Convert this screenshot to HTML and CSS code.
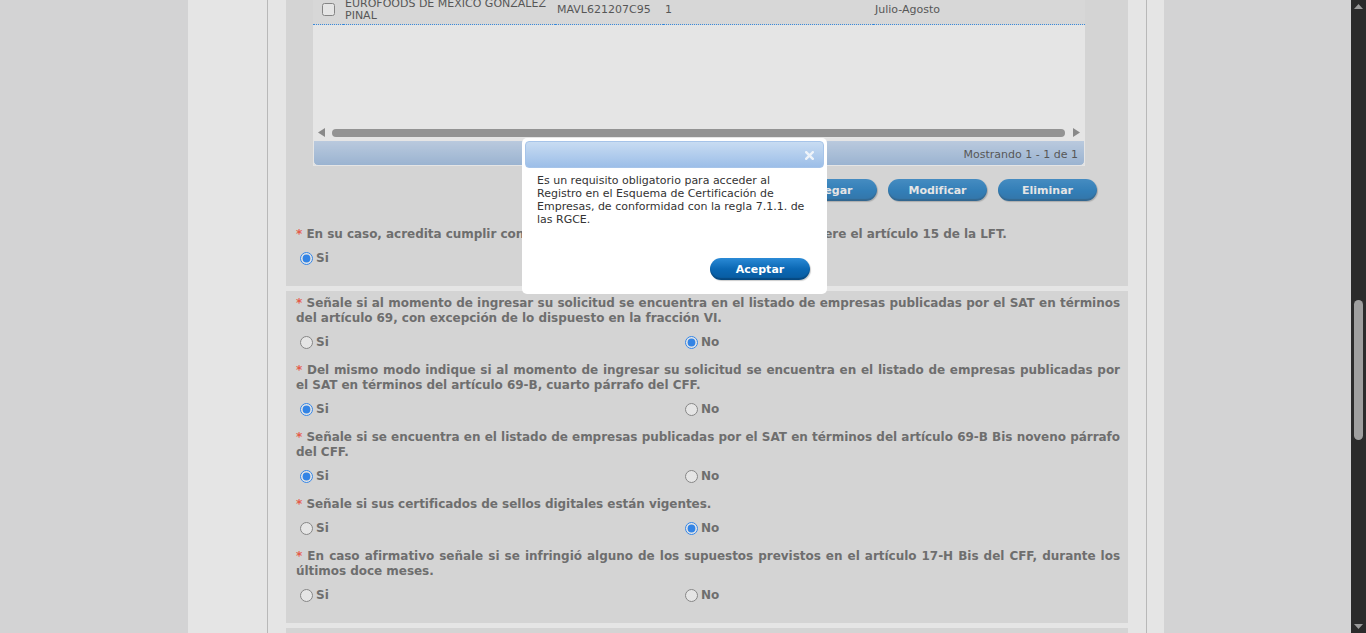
FILE: index.html
```html
<!DOCTYPE html>
<html lang="es">
<head>
<meta charset="utf-8">
<title>Registro en el Esquema de Certificación de Empresas</title>
<link rel="stylesheet" href="styles.css">
</head>
<body>
<div class="screen">
  <div class="viewport">
    <div class="page">
      <div class="container">
        <div class="panel">

          <section class="block block-grid">
            <div class="grid">
              <table class="grid-table">
                <colgroup>
                  <col class="c-check">
                  <col class="c-name">
                  <col class="c-rfc">
                  <col class="c-num">
                  <col class="c-period">
                </colgroup>
                <tr class="grid-row">
                  <td class="cell-check"><input type="checkbox"></td>
                  <td>EUROFOODS DE MÉXICO GONZÁLEZ PINAL</td>
                  <td>MAVL621207C95</td>
                  <td>1</td>
                  <td>Julio-Agosto</td>
                </tr>
              </table>
              <div class="grid-body"></div>
              <div class="hscroll">
                <svg class="hs-arrow" width="7" height="9" viewBox="0 0 7 9"><path d="M7 0 L7 9 L0 4.5 Z"/></svg>
                <div class="hs-thumb"></div>
                <svg class="hs-arrow" width="7" height="9" viewBox="0 0 7 9"><path d="M0 0 L0 9 L7 4.5 Z"/></svg>
              </div>
              <div class="pager">Mostrando 1 - 1 de 1</div>
            </div>

            <div class="actions">
              <button class="btn" type="button">Agregar</button>
              <button class="btn" type="button">Modificar</button>
              <button class="btn" type="button">Eliminar</button>
            </div>

            <p class="q q-first"><span class="req">*</span> En su caso, acredita cumplir con las obligaciones patronales a las que se refiere el artículo 15 de la LFT.</p>
            <div class="opts">
              <label class="opt"><input type="radio" name="q0" checked>Si</label>
              <label class="opt"><input type="radio" name="q0">No</label>
            </div>
          </section>

          <section class="block">
            <p class="q"><span class="req">*</span> Señale si al momento de ingresar su solicitud se encuentra en el listado de empresas publicadas por el SAT en términos del artículo 69, con excepción de lo dispuesto en la fracción VI.</p>
            <div class="opts">
              <label class="opt"><input type="radio" name="q1">Si</label>
              <label class="opt"><input type="radio" name="q1" checked>No</label>
            </div>

            <p class="q"><span class="req">*</span> Del mismo modo indique si al momento de ingresar su solicitud se encuentra en el listado de empresas publicadas por el SAT en términos del artículo 69-B, cuarto párrafo del CFF.</p>
            <div class="opts">
              <label class="opt"><input type="radio" name="q2" checked>Si</label>
              <label class="opt"><input type="radio" name="q2">No</label>
            </div>

            <p class="q"><span class="req">*</span> Señale si se encuentra en el listado de empresas publicadas por el SAT en términos del artículo 69-B Bis noveno párrafo del CFF.</p>
            <div class="opts">
              <label class="opt"><input type="radio" name="q3" checked>Si</label>
              <label class="opt"><input type="radio" name="q3">No</label>
            </div>

            <p class="q"><span class="req">*</span> Señale si sus certificados de sellos digitales están vigentes.</p>
            <div class="opts">
              <label class="opt"><input type="radio" name="q4">Si</label>
              <label class="opt"><input type="radio" name="q4" checked>No</label>
            </div>

            <p class="q"><span class="req">*</span> En caso afirmativo señale si se infringió alguno de los supuestos previstos en el artículo 17-H Bis del CFF, durante los últimos doce meses.</p>
            <div class="opts">
              <label class="opt"><input type="radio" name="q5">Si</label>
              <label class="opt"><input type="radio" name="q5">No</label>
            </div>
          </section>

          <section class="block block-next">
            <p class="q"><span class="req">*</span> Señale si cuenta con el registro de sus trabajadores ante el IMSS.</p>
            <div class="opts">
              <label class="opt"><input type="radio" name="q6">Si</label>
              <label class="opt"><input type="radio" name="q6">No</label>
            </div>
          </section>

        </div>
      </div>
    </div>

    <div class="overlay"></div>

    <div class="dialog" role="dialog">
      <div class="dlg-title">
        <svg class="dlg-close" width="9" height="9" viewBox="0 0 9 9"><path d="M1.2 1.2 L7.8 7.8 M7.8 1.2 L1.2 7.8"/></svg>
      </div>
      <div class="dlg-body">Es un requisito obligatorio para acceder al Registro en el Esquema de Certificación de Empresas, de conformidad con la regla 7.1.1. de las RGCE.</div>
      <div class="dlg-actions">
        <button class="btn btn-ok" type="button">Aceptar</button>
      </div>
    </div>
  </div>

  <div class="vscroll">
    <svg class="vs-arrow" width="9" height="5" viewBox="0 0 9 5"><path d="M0 5 L4.5 0 L9 5 Z"/></svg>
    <div class="vs-thumb" style="margin-top:291px"></div>
    <div class="vs-fill"></div>
    <svg class="vs-arrow vs-down" width="9" height="5" viewBox="0 0 9 5"><path d="M0 0 L9 0 L4.5 5 Z"/></svg>
  </div>
</div>
</body>
</html>
```

FILE: styles.css
```css
* { box-sizing: border-box; }

html, body {
  margin: 0;
  height: 100%;
}

body {
  font-family: "DejaVu Sans", Verdana, sans-serif;
  font-size: 11px;
  color: #333;
  overflow: hidden;
}

.screen {
  display: flex;
  height: 633px;
}

/* page area */
.viewport {
  flex: 1;
  position: relative;
  overflow: hidden;
  background: #e5e6e7;
}

.page {
  margin-top: -5px;
}

.container {
  width: 976px;
  margin-left: 188px;
  background: #fff;
  padding: 0 17px 0 79px;
  min-height: 720px;
}

.panel {
  border-left: 1px solid #bfbfbf;
  border-right: 1px solid #bfbfbf;
  padding: 0 18px;
  min-height: 720px;
}

.block {
  background: #e7e7e7;
  margin-bottom: 5px;
  padding: 4.5px 8px 17.5px 10px;
}

.block-grid {
  padding-top: 0;
}

.block-next {
  padding-top: 12px;
}

/* grid */
.grid {
  width: 772px;
  margin-left: 17px;
  background: #fff;
}

.grid-table {
  width: 772px;
  border-collapse: collapse;
  table-layout: fixed;
}

.c-check { width: 30px; }
.c-name { width: 212px; }
.c-rfc { width: 108px; }
.c-num { width: 210px; }
.c-period { width: 212px; }

.grid-row td {
  background: #ebebeb;
  border-bottom: 1px dotted #0a7cf0;
  padding: 3px 2px 2px;
  height: 29px;
  line-height: 12px;
  font-size: 11px;
  color: #333;
  vertical-align: middle;
}

.grid-row .cell-check input {
  width: 13px;
  height: 13px;
  margin: -1px 0 0 7px;
  display: block;
}

.grid-body {
  height: 100px;
}

.hscroll {
  height: 15px;
  display: flex;
  align-items: center;
  padding: 0 5px;
}

.hs-arrow {
  fill: #7c7c7c;
  flex: none;
}

.hs-thumb {
  flex: 1;
  height: 8px;
  border-radius: 4px;
  background: #8a8a8a;
  margin: 0 8px 0 7px;
}

.pager {
  height: 26px;
  border: 1px solid #fff;
  border-radius: 0 0 5px 5px;
  background: linear-gradient(#c1d8f5, #95b8e2);
  text-align: right;
  padding: 4px 6px 0;
  line-height: 20px;
  color: #333;
}

/* buttons */
.actions {
  display: flex;
  justify-content: flex-end;
  gap: 11px;
  margin-top: 13px;
  padding-right: 23px;
}

.btn {
  width: 99px;
  height: 22px;
  border: 0;
  border-radius: 11px;
  padding: 0;
  font: bold 11px "DejaVu Sans", Verdana, sans-serif;
  color: #fff;
  background: linear-gradient(#1b80cc, #006cbd 55%, #005fa8);
  box-shadow: inset 0 -2px 1px rgba(0, 0, 0, 0.22), 1px 1px 1px rgba(0, 0, 0, 0.25);
}

/* questions */
.q {
  margin: 10px 0 0;
  font-weight: bold;
  font-size: 12px;
  letter-spacing: -0.04px;
  line-height: 15px;
  color: #555;
  text-align: justify;
}

.block > .q:first-child {
  margin-top: 0;
}

.block > .q.q-first {
  margin-top: 25.5px;
}

.req {
  color: #ff3b1f;
}

.opts {
  display: grid;
  grid-template-columns: 385px 1fr;
  height: 21px;
  align-items: center;
  margin-top: 6px;
}

.opt {
  display: flex;
  align-items: center;
  font-weight: bold;
  font-size: 12px;
  color: #555;
}

.opt input {
  width: 13px;
  height: 13px;
  margin: 0 3px 0 4px;
}

/* modal */
.overlay {
  position: absolute;
  inset: 0;
  background: #aaa;
  opacity: 0.3;
}

.dialog {
  position: absolute;
  left: 522px;
  top: 138px;
  width: 305px;
  height: 156px;
  background: #fff;
  border-radius: 5px;
  padding: 3px;
  font-size: 11px;
  color: #333;
}

.dlg-title {
  height: 27px;
  border: 1px solid #a6c4e9;
  border-radius: 4px;
  background: linear-gradient(#c8dcf2, #9cbee8);
  display: flex;
  justify-content: flex-end;
  align-items: center;
  padding: 2px 9px 0 0;
}

.dlg-close {
  stroke: #eef3f9;
  stroke-width: 2.4;
  stroke-linecap: square;
}

.dlg-body {
  height: 84px;
  padding: 5.5px 13px 0 12px;
  line-height: 13px;
}

.dlg-actions {
  display: flex;
  justify-content: flex-end;
  padding: 6px 14px 0 0;
}

.btn-ok {
  width: 100px;
  background: linear-gradient(#2a8ad6, #0b68b4 50%, #085a9e);
  box-shadow: inset 0 -2px 1px rgba(0, 0, 0, 0.2), 1px 1px 1px rgba(0, 0, 0, 0.2);
}

/* browser scrollbar */
.vscroll {
  width: 15px;
  background: #2b2b2b;
  display: flex;
  flex-direction: column;
  align-items: center;
  padding: 4px 0 4px;
}

.vs-arrow {
  fill: #9a9a9a;
  flex: none;
}

.vs-thumb {
  width: 9px;
  height: 140px;
  border-radius: 4.5px;
  background: #9f9f9f;
  flex: none;
}

.vs-fill {
  flex: 1;
}
```
